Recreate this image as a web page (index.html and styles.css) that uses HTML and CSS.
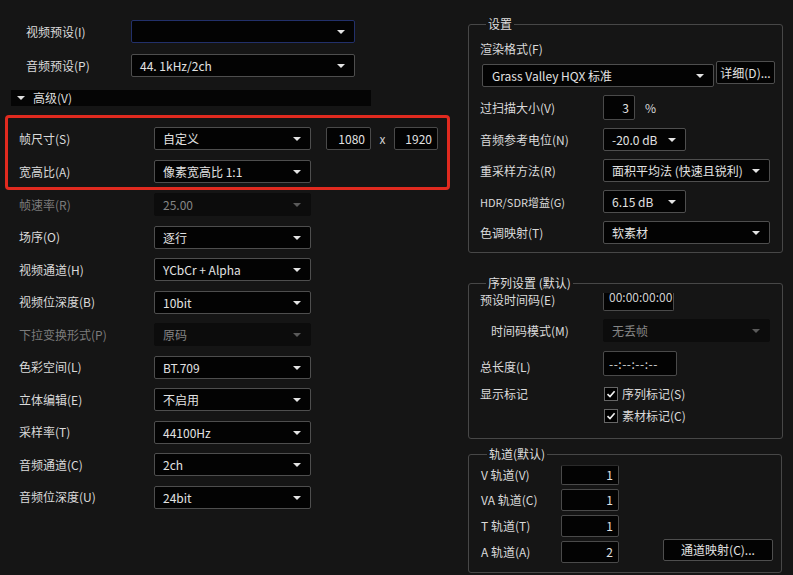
FILE: index.html
```html
<!DOCTYPE html>
<html lang="zh">
<head>
<meta charset="utf-8">
<title>设置</title>
<link rel="stylesheet" href="styles.css">
</head>
<body>
<div class="app">
  <div class="left">
    <div class="row top">
      <span class="label">视频预设(<u>I</u>)</span>
      <div class="select focus w224"><span class="arrow"></span></div>
    </div>
    <div class="row top r2">
      <span class="label">音频预设(<u>P</u>)</span>
      <div class="select w224">44. 1kHz/2ch<span class="arrow"></span></div>
    </div>
    <div class="adv"><span class="tri"></span>高级(<u>V</u>)</div>
    <div class="hl">
      <div class="row adv-row">
        <span class="label">帧尺寸(<u>S</u>)</span>
        <div class="select w157">自定义<span class="arrow"></span></div>
        <div class="num w45">1080</div>
        <span class="times">x</span>
        <div class="num w44">1920</div>
      </div>
      <div class="row adv-row">
        <span class="label">宽高比(<u>A</u>)</span>
        <div class="select w157">像素宽高比 1:1<span class="arrow"></span></div>
      </div>
    </div>
    <div class="rows">
      <div class="row adv-row">
        <span class="label dis">帧速率(<u>R</u>)</span>
        <div class="select w157 disabled">25.00<span class="arrow"></span></div>
      </div>
      <div class="row adv-row">
        <span class="label">场序(<u>O</u>)</span>
        <div class="select w157">逐行<span class="arrow"></span></div>
      </div>
      <div class="row adv-row">
        <span class="label">视频通道(<u>H</u>)</span>
        <div class="select w157">YCbCr + Alpha<span class="arrow"></span></div>
      </div>
      <div class="row adv-row">
        <span class="label">视频位深度(<u>B</u>)</span>
        <div class="select w157">10bit<span class="arrow"></span></div>
      </div>
      <div class="row adv-row">
        <span class="label dis">下拉变换形式(<u>P</u>)</span>
        <div class="select w157 disabled">原码<span class="arrow"></span></div>
      </div>
      <div class="row adv-row">
        <span class="label">色彩空间(<u>L</u>)</span>
        <div class="select w157">BT.709<span class="arrow"></span></div>
      </div>
      <div class="row adv-row">
        <span class="label">立体编辑(<u>E</u>)</span>
        <div class="select w157">不启用<span class="arrow"></span></div>
      </div>
      <div class="row adv-row">
        <span class="label">采样率(<u>T</u>)</span>
        <div class="select w157">44100Hz<span class="arrow"></span></div>
      </div>
      <div class="row adv-row">
        <span class="label">音频通道(<u>C</u>)</span>
        <div class="select w157">2ch<span class="arrow"></span></div>
      </div>
      <div class="row adv-row">
        <span class="label">音频位深度(<u>U</u>)</span>
        <div class="select w157">24bit<span class="arrow"></span></div>
      </div>
    </div>
  </div>

  <div class="right">
    <div class="group g1">
      <span class="legend">设置</span>
      <div class="plain-label">渲染格式(<u>F</u>)</div>
      <div class="format-row">
        <div class="select w232">Grass Valley HQX 标准<span class="arrow"></span></div>
        <div class="btn w59">详细(<u>D</u>)...</div>
      </div>
      <div class="grow overscan">
        <span class="glabel">过扫描大小(<u>V</u>)</span>
        <div class="num w32 h25">3</div>
        <span class="pct">%</span>
      </div>
      <div class="grow">
        <span class="glabel">音频参考电位(<u>N</u>)</span>
        <div class="select w83">-20.0 dB<span class="arrow"></span></div>
      </div>
      <div class="grow">
        <span class="glabel">重采样方法(<u>R</u>)</span>
        <div class="select w167">面积平均法 (快速且锐利)<span class="arrow"></span></div>
      </div>
      <div class="grow">
        <span class="glabel small">HDR/SDR增益(<u>G</u>)</span>
        <div class="select w83">6.15 dB<span class="arrow"></span></div>
      </div>
      <div class="grow">
        <span class="glabel">色调映射(<u>T</u>)</span>
        <div class="select w167">软素材<span class="arrow"></span></div>
      </div>
    </div>

    <div class="group g2">
      <span class="legend">序列设置 (默认)</span>
      <div class="grow tc">
        <span class="glabel">预设时间码(<u>E</u>)</span>
        <div class="num w70 clipped">00:00:00:00</div>
      </div>
      <div class="grow mode">
        <span class="glabel indent">时间码模式(<u>M</u>)</span>
        <div class="select w167 disabled">无丢帧<span class="arrow"></span></div>
      </div>
      <div class="grow len">
        <span class="glabel">总长度(<u>L</u>)</span>
        <div class="lenbox"><span class="lentext">--:--:--:--</span></div>
      </div>
      <div class="marks">
        <span class="glabel">显示标记</span>
        <div class="checks">
          <div class="check"><span class="box"><svg viewBox="0 0 14 14" width="14" height="14"><path d="M3.5 7.2 L6 9.6 L10.6 4.2" fill="none" stroke="#f2f2f2" stroke-width="1.6"/></svg></span><span>序列标记(<u>S</u>)</span></div>
          <div class="check"><span class="box"><svg viewBox="0 0 14 14" width="14" height="14"><path d="M3.5 7.2 L6 9.6 L10.6 4.2" fill="none" stroke="#f2f2f2" stroke-width="1.6"/></svg></span><span>素材标记(<u>C</u>)</span></div>
        </div>
      </div>
    </div>

    <div class="group g3">
      <span class="legend">轨道(默认)</span>
      <div class="trow first">
        <span class="tlabel">V 轨道(<u>V</u>)</span>
        <div class="num w58">1</div>
      </div>
      <div class="trow">
        <span class="tlabel">VA 轨道(<u>C</u>)</span>
        <div class="num w58">1</div>
      </div>
      <div class="trow">
        <span class="tlabel">T 轨道(<u>T</u>)</span>
        <div class="num w58">1</div>
      </div>
      <div class="trow">
        <span class="tlabel">A 轨道(<u>A</u>)</span>
        <div class="num w58">2</div>
        <div class="btn map">通道映射(<u>C</u>)...</div>
      </div>
    </div>
  </div>
</div>
</body>
</html>
```

FILE: styles.css
```css
* { box-sizing: border-box; }
html, body {
  margin: 0;
  padding: 0;
  background: #151515;
}
body {
  width: 793px;
  height: 575px;
  overflow: hidden;
  font-family: "Noto Sans CJK SC", "Noto Sans", sans-serif;
  font-size: 12px;
  color: #dadada;
}
u { text-decoration: none; }

.app {
  display: flex;
  align-items: flex-start;
}

/* ---------- left column ---------- */
.left {
  width: 468px;
  padding-top: 20px;
  display: flex;
  flex-direction: column;
}
.row {
  display: flex;
  align-items: center;
  height: 23px;
}
.row .label {
  flex: none;
  white-space: nowrap;
  line-height: 16px;
}
.row.top { padding-left: 26px; }
.row.top .label { width: 105px; }
.row.top.r2 { margin-top: 11px; }

.select {
  position: relative;
  flex: none;
  height: 23px;
  line-height: 21px;
  padding-left: 8px;
  background: #030303;
  border: 1px solid #4e4e4e;
  border-radius: 2px;
  color: #e2e2e2;
  white-space: nowrap;
  overflow: hidden;
}
.select.focus { border-color: #22306a; }
.select.disabled {
  border-color: #0c0c0c;
  background: #0c0c0c;
  color: #858585;
}
.arrow {
  position: absolute;
  right: 9px;
  top: 9px;
  width: 0;
  height: 0;
  border-left: 4px solid transparent;
  border-right: 4px solid transparent;
  border-top: 4px solid #e4e4e4;
}
.select.disabled .arrow { border-top-color: #5a5a5a; }

.w224 { width: 224px; }
.w157 { width: 157px; }
.w232 { width: 232px; }
.w167 { width: 167px; }
.w83 { width: 83px; }

.num {
  flex: none;
  height: 23px;
  line-height: 21px;
  background: #030303;
  border: 1px solid #4a4a4a;
  border-radius: 2px;
  text-align: right;
  padding-right: 5px;
  color: #e2e2e2;
  white-space: nowrap;
  overflow: hidden;
}
.w45 { width: 45px; margin-left: 15px; }
.w44 { width: 44px; }
.w32 { width: 32px; }
.w58 { width: 58px; }
.w70 { width: 71px; }
.h25 { height: 25px; line-height: 23px; }
.times {
  width: 23px;
  text-align: center;
  color: #cfcfcf;
}

.adv {
  margin: 13px 0 0 11px;
  width: 360px;
  height: 16px;
  line-height: 16px;
  background: #050505;
  display: flex;
  align-items: center;
  color: #dcdcdc;
}
.tri {
  width: 0;
  height: 0;
  margin: 0 8px 0 6px;
  border-left: 4px solid transparent;
  border-right: 4px solid transparent;
  border-top: 4px solid #e0e0e0;
}

.hl {
  margin: 9px 0 0 5px;
  width: 445px;
  height: 75px;
  border: 3px solid #e12a1f;
  border-radius: 4px;
  padding: 9px 0 0 11px;
  display: flex;
  flex-direction: column;
  gap: 10px;
}
.adv-row .label { width: 135px; }
.label.dis { color: #7c7c7c; }

.rows {
  margin-top: 3px;
  padding-left: 19px;
  display: flex;
  flex-direction: column;
  gap: 9.5px;
}

/* ---------- right column ---------- */
.right {
  width: 315px;
  display: flex;
  flex-direction: column;
}
.group {
  border: 1px solid #474747;
  border-radius: 3px;
  display: flex;
  flex-direction: column;
  align-items: flex-start;
}
.legend {
  display: inline-block;
  margin: -9px 0 0 6px;
  padding: 0 2px;
  background: #151515;
  line-height: 16px;
  height: 16px;
  color: #dedede;
  white-space: nowrap;
}
.g1 {
  margin-top: 24px;
  padding: 0 0 8px 11px;
  height: 229px;
}
.plain-label {
  margin-top: 9px;
  line-height: 16px;
}
.format-row {
  margin-top: 4px;
  display: flex;
  align-items: flex-start;
  height: 26px;
}
.format-row .select {
  margin: 3px 2px 0 2px;
  padding-left: 9px;
}
.btn {
  flex: none;
  height: 23px;
  line-height: 21px;
  background: #030303;
  border: 1px solid #4e4e4e;
  border-radius: 2px;
  text-align: center;
  color: #e2e2e2;
  white-space: nowrap;
}
.w59 { width: 59px; }

.grow {
  display: flex;
  align-items: center;
  margin-top: 8px;
}
.glabel {
  flex: none;
  width: 123px;
  line-height: 16px;
  white-space: nowrap;
}
.glabel.small { font-size: 11px; }
.glabel.indent { padding-left: 11px; }
.pct {
  margin-left: 10px;
}

.g2 {
  margin-top: 30px;
  padding: 0 0 0 11px;
  height: 156px;
}
.g2 .legend { margin-bottom: -3px; }
.grow.tc { margin-top: 1px; height: 22px; align-items: flex-end; }
.grow.tc .glabel { padding-bottom: 3px; }
.clipped {
  height: 18px;
  border-top: none;
  border-radius: 0 0 2px 2px;
  line-height: 8px;
  text-align: left;
  padding: 0 0 0 5px;
  color: #cfcfcf;
}
.grow.mode { margin-top: 8px; }
.grow.len { margin-top: 9px; height: 25px; }
.grow.len .glabel { padding-top: 6px; }
.lenbox {
  flex: none;
  width: 74px;
  height: 25px;
  background: #030303;
  border: 1px solid #4a4a4a;
  border-radius: 2px;
  padding-left: 5px;
  display: flex;
  align-items: center;
}
.lentext {
  line-height: 16px;
  color: #d8d8d8;
  letter-spacing: 0.5px;
  white-space: nowrap;
}
.marks {
  display: flex;
  align-items: flex-start;
  margin-top: 10px;
}
.checks {
  display: flex;
  flex-direction: column;
  gap: 6px;
}
.check {
  display: flex;
  align-items: center;
  height: 16px;
  line-height: 16px;
  white-space: nowrap;
  padding-left: 1px;
}
.box {
  flex: none;
  width: 14px;
  height: 14px;
  margin-right: 4px;
  background: #000;
  border: 1px solid #666;
  display: flex;
  align-items: center;
  justify-content: center;
  overflow: hidden;
}
.box svg { display: block; flex: none; }

.g3 {
  margin-top: 15px;
  padding: 0 0 0 12px;
  height: 119px;
  width: 314px;
}
.trow {
  display: flex;
  align-items: center;
  margin-top: 4px;
  height: 22px;
}
.trow .num { height: 22px; line-height: 20px; }
.trow.first { margin-top: 3px; height: 20px; }
.trow.first .num { height: 20px; line-height: 18px; border-top-color: #2a2a2a; }
.tlabel {
  flex: none;
  width: 80px;
  line-height: 16px;
  white-space: nowrap;
}
.btn.map {
  width: 110px;
  margin-left: 44px;
  margin-top: -4px;
  line-height: 20px;
  height: 22px;
}
```
